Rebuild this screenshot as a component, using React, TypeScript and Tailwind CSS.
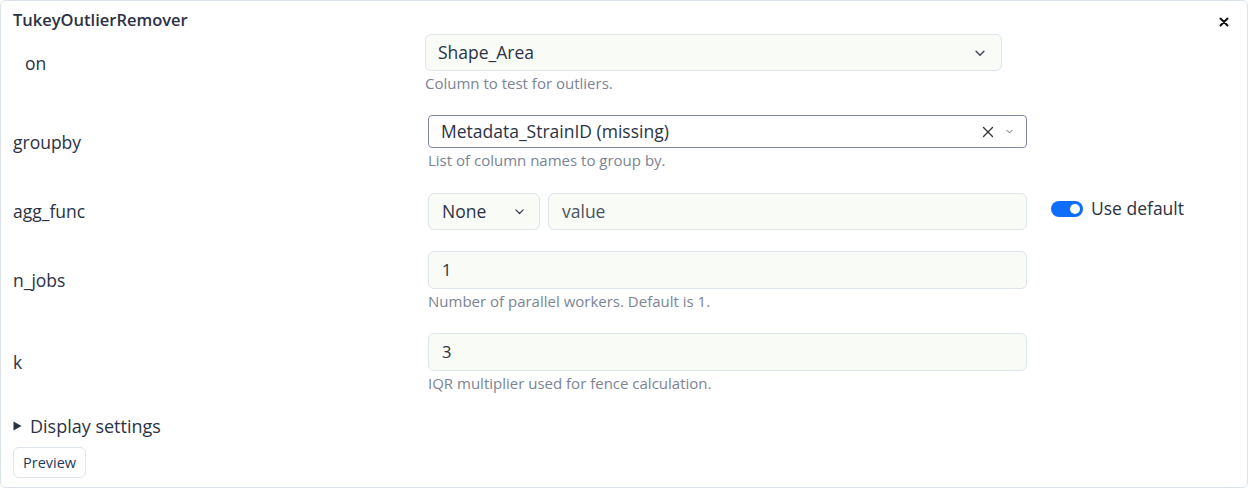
import React from "react";

function Chevron({ size = 12, className = "" }: { size?: number; className?: string }) {
  return (
    <svg width={size} height={size} viewBox="0 0 16 16" className={className} fill="none">
      <path d="M3.5 6l4.5 4.5L12.5 6" stroke="currentColor" strokeWidth="1.6" strokeLinecap="round" strokeLinejoin="round" />
    </svg>
  );
}

function Help({ children }: { children: React.ReactNode }) {
  return <div className="mt-[3px] text-[15px] leading-[18px] text-[#7b8494]">{children}</div>;
}

function Field({ value }: { value: string }) {
  return (
    <div className="h-[38px] w-[599px] rounded-md border border-[#dfe5ec] bg-[#f9fbf6] px-[13px] flex items-center text-[16.5px] text-[#2b3244]">
      {value}
    </div>
  );
}

export default function App() {
  return (
    <div
      className="w-[1248px] h-[488px] bg-white text-[#2b3244]"
      style={{ fontFamily: "'Open Sans', 'Noto Sans', sans-serif" }}
    >
      <div className="h-full rounded-md border border-[#dbe2ec] px-3 flex flex-col">
        {/* Header */}
        <div className="flex items-center justify-between h-[36px] pt-[2px]">
          <span className="text-[16.5px] font-semibold leading-[24px]">TukeyOutlierRemover</span>
          <svg width="10" height="10" viewBox="0 0 10 10" className="mr-[6px] mt-[4px]">
            <path d="M1.5 1.5l7 7M8.5 1.5l-7 7" stroke="#111" strokeWidth="2" strokeLinecap="round" />
          </svg>
        </div>

        {/* on */}
        <div className="flex items-center h-[56px] mt-[-2px]">
          <div className="w-[412px] pl-3 text-[17.5px]">on</div>
          <div className="flex flex-col">
            <div className="h-[37px] w-[577px] rounded-md border border-[#dfe5ec] bg-[#f9fbf6] pl-[12px] pr-[14px] flex items-center justify-between text-[17.5px]">
              <span>Shape_Area</span>
              <Chevron size={14} className="text-[#3b4252]" />
            </div>
            <Help>Column to test for outliers.</Help>
          </div>
        </div>

        {/* groupby */}
        <div className="flex items-center mt-[24px]">
          <div className="w-[415px] text-[17.5px]">groupby</div>
          <div className="flex flex-col">
            <div className="h-[33px] w-[599px] rounded-[4px] border border-[#7f8aa3] bg-white pl-[12px] pr-[12px] flex items-center text-[17.5px]">
              <span className="flex-1">Metadata_StrainID (missing)</span>
              <svg width="12" height="12" viewBox="0 0 12 12" className="mr-[11px]">
                <path d="M1.5 1.5l9 9M10.5 1.5l-9 9" stroke="#333" strokeWidth="1.3" strokeLinecap="round" />
              </svg>
              <Chevron size={9} className="text-[#555]" />
            </div>
            <Help>List of column names to group by.</Help>
          </div>
        </div>

        {/* agg_func */}
        <div className="flex items-center mt-[24px]">
          <div className="w-[415px] text-[17.5px]">agg_func</div>
          <div className="flex items-center gap-[8px]">
            <div className="h-[37px] w-[112px] rounded-md border border-[#dfe5ec] bg-[#f9fbf6] pl-[13px] pr-[13px] flex items-center justify-between text-[17.5px]">
              <span>None</span>
              <Chevron size={13} className="text-[#3b4252]" />
            </div>
            <div className="h-[37px] w-[479px] rounded-md border border-[#dfe5ec] bg-[#f9fbf6] px-[13px] flex items-center text-[17.5px] text-[#4b5262]">
              value
            </div>
          </div>
          <div className="ml-[24px] flex items-center gap-[8px] mt-[-6px]">
            <div className="relative h-[16px] w-[32px] rounded-full bg-[#0d6efd]">
              <div className="absolute right-[3px] top-[3px] h-[10px] w-[10px] rounded-full bg-white" />
            </div>
            <span className="text-[17.5px]">Use default</span>
          </div>
        </div>

        {/* n_jobs */}
        <div className="flex items-center mt-[21px]">
          <div className="w-[415px] text-[17.5px]">n_jobs</div>
          <div className="flex flex-col">
            <Field value="1" />
            <Help>Number of parallel workers. Default is 1.</Help>
          </div>
        </div>

        {/* k */}
        <div className="flex items-center mt-[23px]">
          <div className="w-[415px] text-[17.5px]">k</div>
          <div className="flex flex-col">
            <Field value="3" />
            <Help>IQR multiplier used for fence calculation.</Help>
          </div>
        </div>

        {/* Display settings */}
        <div className="flex items-center gap-[8px] mt-[22px] text-[18px] leading-[24px]">
          <svg width="9" height="10" viewBox="0 0 9 10">
            <path d="M0.5 0.5L8.5 5L0.5 9.5Z" fill="#2b3244" />
          </svg>
          <span>Display settings</span>
        </div>

        <div className="mt-[9px]">
          <button className="h-[31px] px-[9px] rounded-md border border-[#dfe5ec] bg-white text-[14.5px] text-[#1f3a5c]">
            Preview
          </button>
        </div>
      </div>
    </div>
  );
}
